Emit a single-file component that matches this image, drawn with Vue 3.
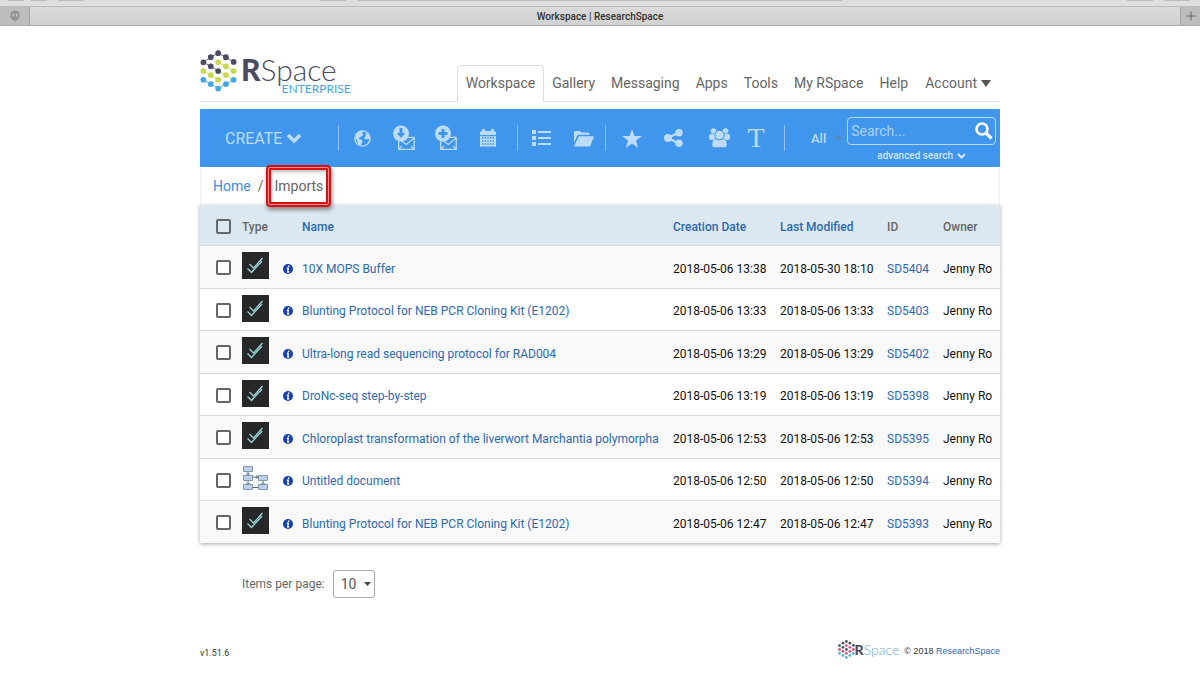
<script setup>
import { ref } from 'vue'

const dark = '#4b4c61'
const lime = '#cbd551'
const sky = '#45a5e4'
const dots = [
  [85, 37, dark], [63, 49, dark], [108, 49, dark], [41, 64, dark], [131, 63, dark],
  [63, 76, dark], [85, 90, dark], [85, 64, lime], [108, 76, lime], [131, 90, lime],
  [41, 90, lime], [63, 102, lime], [85, 116, lime], [108, 102, lime],
  [41, 116, sky], [63, 129, sky], [85, 142, sky], [108, 129, sky], [131, 116, sky]
]
const smallTones = { [dark]: '#4b4c61', [lime]: '#d8527c', [sky]: '#52aee6' }

const nav = ['Gallery', 'Messaging', 'Apps', 'Tools', 'My RSpace', 'Help']
const docs = [
  { name: '10X MOPS Buffer', created: '2018-05-06 13:38', modified: '2018-05-30 18:10', id: 'SD5404' },
  { name: 'Blunting Protocol for NEB PCR Cloning Kit (E1202)', created: '2018-05-06 13:33', modified: '2018-05-06 13:33', id: 'SD5403' },
  { name: 'Ultra-long read sequencing protocol for RAD004', created: '2018-05-06 13:29', modified: '2018-05-06 13:29', id: 'SD5402' },
  { name: 'DroNc-seq step-by-step', created: '2018-05-06 13:19', modified: '2018-05-06 13:19', id: 'SD5398' },
  { name: 'Chloroplast transformation of the liverwort Marchantia polymorpha', created: '2018-05-06 12:53', modified: '2018-05-06 12:53', id: 'SD5395' },
  { name: 'Untitled document', created: '2018-05-06 12:50', modified: '2018-05-06 12:50', id: 'SD5394', diagram: true },
  { name: 'Blunting Protocol for NEB PCR Cloning Kit (E1202)', created: '2018-05-06 12:47', modified: '2018-05-06 12:47', id: 'SD5393' }
]
const search = ref('')
const perPage = ref('10')
</script>

<template>
  <div class="screen">
    <div class="browser">
      <div class="chrome-controls">
        <i class="w16"></i><i class="w16 near"></i><i class="w26"></i>
        <i class="w26 menu"></i><i class="address"></i>
        <i class="w26 push"></i><i class="w26"></i>
      </div>
      <div class="tabs">
        <button class="pinned" aria-label="Pinned tab">
          <svg width="12" height="12" viewBox="0 0 12 12"><path d="M6 0.5a5 5 0 0 1 .8 9.9L6.6 12 4.7 10.3A5 5 0 0 1 6 .5Z" fill="#959595" /><path d="M4.2 3.8v2.4M7.8 3.8v2.4M4.3 4v2M7.7 4v2" stroke="#c6c6c6" stroke-width="1.5" /></svg>
        </button>
        <div class="tab-title">Workspace | ResearchSpace</div>
        <button class="new-tab" aria-label="New tab">
          <svg width="10" height="10" viewBox="0 0 10 10"><path d="M5 .5v9M.5 5h9" stroke="#666" /></svg>
        </button>
      </div>
    </div>

    <div class="page">
      <header>
        <a href="#" class="logo" aria-label="RSpace Enterprise">
          <svg class="mark" width="37" height="42" viewBox="31 28 110 124">
            <g fill="none" stroke-width="2.5">
              <path d="M41 64 63 49 85 37 108 49 131 63M41 64 63 76 85 90" stroke="#4b4c61" />
              <path d="M85 64 108 76 131 90M41 90 63 102 85 116M85 90 108 102 131 116" stroke="#cbd551" />
              <path d="M41 116 63 129 85 142 108 129 131 116" stroke="#45a5e4" />
            </g>
            <circle v-for="(d, i) in dots" :key="i" :cx="d[0]" :cy="d[1]" r="8.5" :fill="d[2]" />
          </svg>
          <span class="wordmark">
            <span class="word"><b>R</b>Space</span>
            <span class="edition">ENTERPRISE</span>
          </span>
        </a>
        <nav>
          <a href="#" class="active">Workspace</a>
          <a v-for="n in nav" :key="n" href="#">{{ n }}</a>
          <a href="#" class="account">Account <svg width="10" height="7" viewBox="0 0 10 7"><path d="M0 0h10L5 7Z" fill="#555" /></svg></a>
        </nav>
      </header>

      <div class="toolbar">
        <button class="create">CREATE
          <svg width="16" height="11" viewBox="0 0 16 11"><path d="m2 2 6 6 6-6" fill="none" stroke="currentColor" stroke-width="3.6" /></svg>
        </button>
        <div class="group">
          <button aria-label="Publish">
            <svg width="17" height="17" viewBox="0 0 17 17"><circle cx="8.500" cy="8.500" r="7.600" fill="none" stroke="currentColor" stroke-width="1.400" /><path d="M1 7 3 3 7 1l2.500.5-1.500 2 1.500 1-2 2-1.500.5L5 9l3 1 .5 2-2 3.500L4 14 3.500 11ZM11.500 3l3 1.500 1.500 4-1.500 1-2.500-.5-1 1-.5-2.500L12 6Z" fill="currentColor" /></svg>
          </button>
          <button aria-label="Import by mail">
            <svg width="22" height="26" viewBox="0 0 22 26"><path d="M5.700 13v11.300h15.500v-12H11" fill="none" stroke="currentColor" stroke-width="1.300" /><path d="m6 14 7.300 5.500 7.700-6.500M6 24l3-3M21 24l-3-3" fill="none" stroke="currentColor" stroke-width="1.100" /><circle cx="8" cy="8.500" r="8" fill="currentColor" /><path d="M8 3v6" stroke="#4096ec" stroke-width="3" /><path d="M3.800 8h8.400L8 13Z" fill="#4096ec" /></svg>
          </button>
          <button aria-label="Add by mail">
            <svg width="22" height="26" viewBox="0 0 22 26"><path d="M5.700 13v11.300h15.500v-12H11" fill="none" stroke="currentColor" stroke-width="1.300" /><path d="m6 14 7.300 5.500 7.700-6.500M6 24l3-3M21 24l-3-3" fill="none" stroke="currentColor" stroke-width="1.100" /><circle cx="8" cy="8.500" r="8" fill="currentColor" /><path d="M8 4v9M3.500 8.500h9" stroke="#4096ec" stroke-width="3" /></svg>
          </button>
          <button aria-label="Calendar">
            <svg width="16" height="18" viewBox="0 0 16 18"><path d="M0 3.500Q0 2 1.500 2H2V1a1 1 0 0 1 3 0v1h6V1a1 1 0 0 1 3 0v1h.5Q16 2 16 3.500V6H0ZM0 7.200h16V17.500H0Z" fill="currentColor" /><path d="M2 9h12M2 12h12M2 15h12" stroke="#4096ec" stroke-width="1.500" stroke-dasharray="1.500 1.125" /></svg>
          </button>
        </div>
        <div class="group">
          <button aria-label="List view">
            <svg width="19" height="16" viewBox="0 0 19 16"><path d="M0 0h4v4H0ZM0 6h4v4H0ZM0 12h4v4H0ZM6 1h13v2H6ZM6 7h13v2H6ZM6 13h13v2H6Z" fill="currentColor" /></svg>
          </button>
          <button aria-label="Folder view">
            <svg width="21" height="17" viewBox="0 0 21 17"><path d="M1 13V2.500Q1 1 2.500 1H7l1.500 1.500H15Q16.500 2.500 16.500 4v.8H5.500Q4.500 4.800 4 6Z" fill="currentColor" /><path d="M5.800 6.200H21L17.500 15.500Q17 16.500 16 16.500H1Z" fill="currentColor" /></svg>
          </button>
        </div>
        <div class="group last">
          <button class="star" aria-label="Favourites">
            <svg width="20" height="19" viewBox="0 0 20 19"><path d="m10 0 2.400 7H20l-6.100 4.600L16.200 19 10 14.500 3.800 19l2.300-7.400L0 7h7.600Z" fill="currentColor" /></svg>
          </button>
          <button class="share" aria-label="Share">
            <svg width="19" height="18" viewBox="0 0 19 18"><path d="M15 3.500 4 9l11 5.500" fill="none" stroke="currentColor" stroke-width="2.400" /><circle cx="4" cy="9" r="4" fill="currentColor" /><circle cx="15" cy="3.700" r="3.700" fill="currentColor" /><circle cx="15" cy="14.300" r="3.700" fill="currentColor" /></svg>
          </button>
          <button class="people" aria-label="Groups">
            <svg width="21" height="20" viewBox="0 0 21 20" fill="currentColor"><circle cx="4.500" cy="3" r="2.800" /><circle cx="16.500" cy="3" r="2.800" /><rect x="0" y="6" width="7" height="6" rx="2" /><rect x="14" y="6" width="7" height="6" rx="2" /><circle cx="10.500" cy="7" r="4.700" stroke="#4096ec" /><path d="M3 16q0-5 4-5 3.500 2 7 0 4 0 4 5v1.500q0 2-2 2H5q-2 0-2-2Z" stroke="#4096ec" stroke-width=".6" /></svg>
          </button>
          <button class="type" aria-label="Templates">T</button>
        </div>
        <div class="find">
          <button class="scope">All</button><i class="dot"></i>
          <div class="find-col">
            <form class="searchbox" @submit.prevent>
              <input v-model="search" type="text" placeholder="Search..." aria-label="Search" />
              <button aria-label="Run search">
                <svg width="18" height="18" viewBox="0 0 18 18"><circle cx="7" cy="7" r="5.500" fill="none" stroke="#fff" stroke-width="2.600" /><path d="m11 11 5.500 5.500" stroke="#fff" stroke-width="3.200" /></svg>
              </button>
            </form>
            <a href="#" class="advanced">advanced search <svg width="9" height="6" viewBox="0 0 9 6"><path d="m1 1 3.500 3.500L8 1" fill="none" stroke="currentColor" stroke-width="2.200" /></svg></a>
          </div>
        </div>
      </div>

      <div class="crumbs">
        <a href="#">Home</a><span class="slash">/</span><span class="current">Imports</span>
      </div>

      <table>
        <colgroup><col class="c-check" /><col class="c-type" /><col /><col class="c-date" /><col class="c-date" /><col class="c-id" /><col class="c-owner" /></colgroup>
        <thead>
          <tr>
            <th class="check"><input type="checkbox" aria-label="Select all" /></th>
            <th>Type</th>
            <th class="name"><a href="#">Name</a></th>
            <th><a href="#">Creation Date</a></th>
            <th><a href="#">Last Modified</a></th>
            <th>ID</th>
            <th>Owner</th>
          </tr>
        </thead>
        <tbody>
          <tr v-for="d in docs" :key="d.id">
            <td class="check"><input type="checkbox" :aria-label="'Select ' + d.id" /></td>
            <td class="kind">
              <svg v-if="!d.diagram" width="27" height="27" viewBox="0 0 27 27"><rect width="27" height="27" fill="#252729" /><g fill="none" stroke="#98d5d8" stroke-width="1.300"><path d="m7.500 12 4 4 9-10" /><path d="m5.500 16.500 4 4L20 9" /></g></svg>
              <svg v-else width="27" height="27" viewBox="0 0 27 27"><g fill="none" stroke="#56677f"><path d="M6 6v14M10 12h7M10 22.500h7M21 14v7" /><path d="m4.500 8.500 1.500 2 1.500-2M4.500 18 6 20l1.500-2M19.500 18l1.500 2 1.500-2M14 10.500l2 1.500-2 1.500" /></g><g fill="#bcd0e8" stroke="#8197b4"><path d="M1.500 1.500h9v5h-9ZM1.500 10.500h9v5h-9ZM16.500 10.500h9v5h-9ZM1.500 19.500h9v5h-9ZM16.500 19.500h9v5h-9Z" /></g></svg>
            </td>
            <td class="name">
              <button class="info" aria-label="Info"><svg width="10" height="10" viewBox="0 0 10 10"><circle cx="5" cy="5" r="5" fill="#1440b4" /><path d="M5.600 1.600v1.500M3.800 4.300h1.400L4.800 8H6.200" fill="none" stroke="#fff" stroke-width="1.400" /></svg></button>
              <a href="#">{{ d.name }}</a>
            </td>
            <td>{{ d.created }}</td>
            <td>{{ d.modified }}</td>
            <td><a href="#">{{ d.id }}</a></td>
            <td>Jenny Ro</td>
          </tr>
        </tbody>
      </table>

      <div class="paging">
        <label for="per-page">Items per page:</label>
        <span class="select">
          <select id="per-page" v-model="perPage"><option>10</option><option>20</option><option>50</option></select>
          <svg width="7" height="4" viewBox="0 0 7 4"><path d="M0 0h7L3.500 4Z" fill="#444" /></svg>
        </span>
      </div>

      <footer>
        <span class="version">v1.51.6</span>
        <span class="credit">
          <svg width="17" height="19" viewBox="31 28 110 124"><circle v-for="(d, i) in dots" :key="i" :cx="d[0]" :cy="d[1]" r="9" :fill="smallTones[d[2]]" /></svg>
          <span class="mini"><b>R</b>Space</span>
          <span class="owner">© 2018 <a href="#">ResearchSpace</a></span>
        </span>
      </footer>
    </div>
  </div>
</template>

<style>
body { margin: 0; background: #fff; }
</style>

<style scoped>
.screen { font-family: Roboto, "Liberation Sans", sans-serif; font-size: 12px; color: #111; }
.screen * { box-sizing: border-box; }
a { text-decoration: none; color: #2c68b4; }
button { font: inherit; color: inherit; background: none; border: 0; padding: 0; }
svg { display: block; flex: none; }

.browser { background: #dedede; border-bottom: 1px solid #aaa; }
.chrome-controls { display: flex; height: 6px; padding: 0 10px 0 8px; }
.chrome-controls i { height: 1px; background: #bababa; }
.chrome-controls i + i { margin-left: 11px; }
.chrome-controls i.near { margin-left: 7px; }
.chrome-controls i.menu { margin-left: 20%; }
.chrome-controls i.push { margin-left: auto; }
.w16 { width: 16px; }
.w26 { width: 26px; }
.address { width: 41%; }
.tabs { display: flex; height: 19px; border-top: 1px solid #bcbcbc; background: linear-gradient(#dadada, #d1d1d1); }
.tabs button { display: flex; align-items: center; justify-content: center; background: #bdbdbd; }
.pinned { width: 30px; border-right: 1px solid #a3a3a3; }
.new-tab { width: 20px; border-left: 1px solid #a3a3a3; }
.tab-title { flex: 1; padding-right: 10px; text-align: center; font: 500 10px/20px Roboto, sans-serif; color: #333; }

.page { width: 100%; max-width: 800px; margin: 0 auto; }
header { display: flex; justify-content: space-between; align-items: flex-end; height: 76px; border-bottom: 1px solid #dcdfe4; }
.logo { display: flex; align-items: flex-start; gap: 4px; padding-bottom: 8px; color: #4b4c61; }
.wordmark { display: flex; flex-direction: column; align-items: flex-end; padding-top: 3px; }
.word { font: 300 30px/32px Lato, sans-serif; }
.word b { font-weight: 900; }
.edition { margin-right: -14px; font: 12px/8px Lato, sans-serif; color: #45a5e4; }
nav { display: flex; margin-bottom: -1px; }
nav a { display: flex; align-items: center; gap: 4px; height: 37px; padding: 0 7px 2px; font-size: 14px; color: #666; border: 1px solid transparent; border-bottom: 0; }
nav a.account { padding: 0 8px 2px; }
nav a.active { padding: 0 8px 2px; border-color: #dcdfe4; border-radius: 4px 4px 0 0; background: #fff; }

.toolbar { display: flex; align-items: center; height: 58px; margin-top: 7px; padding: 0 4px 0 25px; background: #4096ec; color: #bddcfb; }
.create { display: flex; flex: none; align-items: center; gap: 4px; width: 113px; font-size: 16px; }
.group { display: flex; flex: none; align-items: center; height: 26px; padding: 0 8px 0 2px; border-left: 1px solid #8dc1f5; }
.group + .group { padding: 0 1px 0 2px; }
.group button { display: flex; align-items: center; justify-content: center; width: 42px; }
.group.last { padding: 0 16px 0 6px; border-right: 1px solid #8dc1f5; }
.group .star { width: 40px; }
.group .people { width: 50px; }
.group .type { width: 24px; font: 28px/26px "Liberation Serif", serif; }
.find { display: flex; align-items: center; flex: 1; min-width: 0; padding-left: 26px; }
.scope { font-size: 13px; font-weight: 500; }
.dot { width: 6px; height: 6px; margin: 0 6px 0 9px; border-radius: 50%; background: #5589c2; }
.find-col { flex: 1; display: flex; flex-direction: column; align-items: center; min-width: 0; padding-top: 4px; }
.searchbox { display: flex; align-items: center; width: 100%; height: 28px; padding-right: 2px; border: 1px solid #b4d7fa; border-radius: 4px; }
.searchbox input { flex: 1; min-width: 0; border: 0; padding: 0 3px; background: none; outline: 0; color: #fff; font: 14px Roboto, sans-serif; }
.searchbox input::placeholder { color: #a9d1f9; opacity: 1; }
.advanced { display: flex; align-items: center; gap: 4px; margin-top: 4px; font-size: 10px; font-weight: 500; line-height: 14px; color: #cfe6fd; }

.crumbs { display: flex; align-items: center; height: 38px; padding-left: 12px; font-size: 14px; border: 1px solid #eee; border-width: 0 1px; color: #666; }
.crumbs a { color: #3c8ee0; }
.slash { margin: 0 11px 0 7px; }
.current { position: relative; }
.current::after { content: ""; position: absolute; inset: -13px -8px -13px -8px; border: 2px solid #d01414; border-radius: 4px; box-shadow: inset 0 0 0 1px #ff8c8c, inset 0 0 0 3px #d01414, inset 1px 2px 3px 3px #bbb, 1px 3px 4px #888; }

table { width: 100%; table-layout: fixed; border-collapse: collapse; box-shadow: 0 1px 4px rgba(0, 0, 0, .35); }
.c-check { width: 42px; }
.c-type { width: 41px; }
.c-date { width: 107px; }
.c-id { width: 56px; }
.c-owner { width: 57px; }
th { height: 40px; padding: 4px 0 0; text-align: left; font-weight: 500; color: #666; background: #dbe8f2; white-space: nowrap; }
td { height: 42px; padding: 4px 0 0; border-top: 1px solid #ddd; white-space: nowrap; }
tbody tr:nth-child(odd) td { height: 43px; background: #f9f9f9; }
tbody tr { background: #fff; }
th.check { padding: 4px 0 0 16px; }
td.check { padding: 2px 0 0 16px; }
td.kind { padding: 6px 0 0; vertical-align: top; }
td.name { overflow: hidden; }
th.name { padding-left: 19px; }
.info { display: inline-block; vertical-align: -1px; margin-right: 9px; }
input[type="checkbox"] { appearance: none; display: block; width: 15px; height: 15px; margin: 0; border: 2px solid #666; border-radius: 2px; background: #fff; }
th input[type="checkbox"] { background: transparent; }

.paging { display: flex; align-items: center; gap: 8px; margin-top: 27px; padding-left: 42px; color: #666; }
.select { position: relative; }
select { appearance: none; display: block; width: 42px; height: 28px; padding: 0 7px; border: 1px solid #aaa; border-radius: 3px; background: #fff; color: #555; font: 14px Roboto, sans-serif; }
.select svg { position: absolute; right: 4px; top: 12px; pointer-events: none; }

footer { display: flex; align-items: center; justify-content: space-between; margin-top: 42px; font-size: 9px; color: #333; }
.version { padding-top: 7px; }
.credit { display: flex; align-items: center; }
.owner { padding-top: 2px; font-family: "Liberation Sans", sans-serif; }
.mini { margin-right: 5px; font: 300 14px/18px Lato, sans-serif; color: #6fa9d8; }
.mini b { font-weight: 900; color: #4b4c61; }
</style>
